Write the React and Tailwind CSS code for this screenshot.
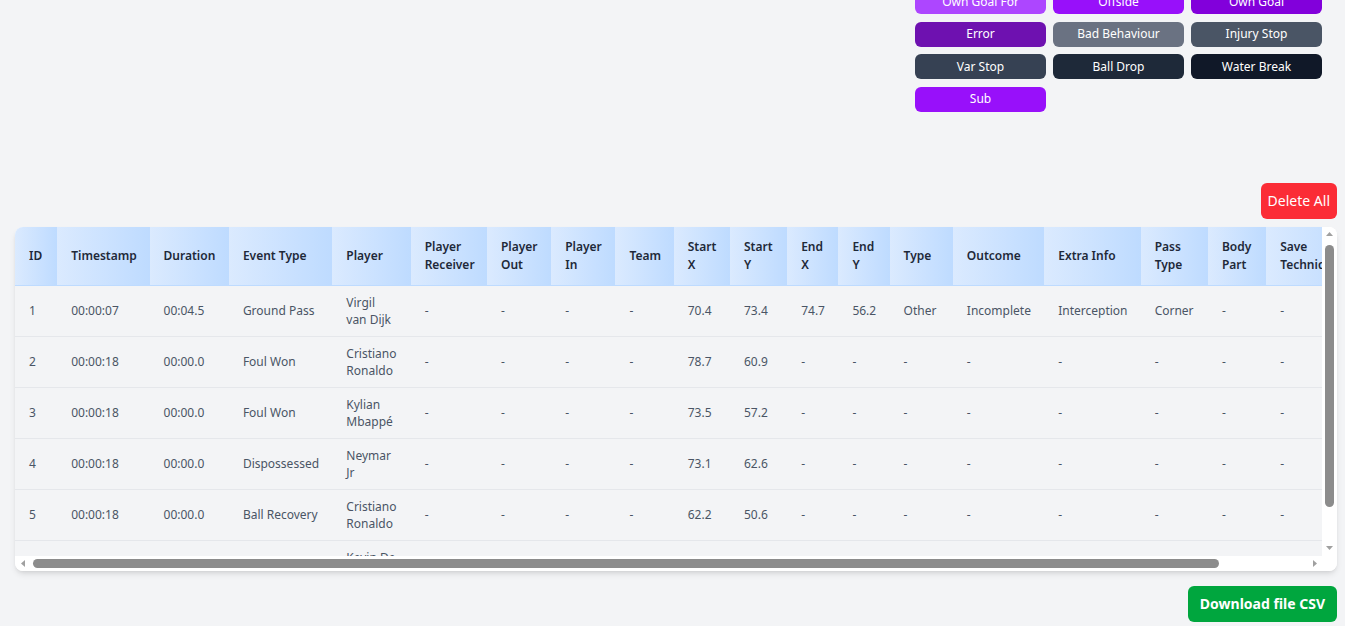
const EVENT_BUTTONS = [
  { label: "Own Goal For", cls: "bg-purple-500" },
  { label: "Offside", cls: "bg-purple-600" },
  { label: "Own Goal", cls: "bg-purple-700" },
  { label: "Error", cls: "bg-purple-800" },
  { label: "Bad Behaviour", cls: "bg-gray-500" },
  { label: "Injury Stop", cls: "bg-gray-600" },
  { label: "Var Stop", cls: "bg-gray-700" },
  { label: "Ball Drop", cls: "bg-gray-800" },
  { label: "Water Break", cls: "bg-gray-900" },
  { label: "Sub", cls: "bg-purple-600" },
];

const COLUMNS = [
  { key: "id", label: "ID", w: "w-[42px]" },
  { key: "timestamp", label: "Timestamp", w: "w-[92px]" },
  { key: "duration", label: "Duration", w: "w-[79px]" },
  { key: "eventType", label: "Event Type", w: "w-[103px]" },
  { key: "player", label: "Player", w: "w-[78px]" },
  { key: "receiver", label: "Player Receiver", w: "w-[76px]" },
  { key: "playerOut", label: "Player Out", w: "w-[64px]" },
  { key: "playerIn", label: "Player In", w: "w-[64px]" },
  { key: "team", label: "Team", w: "w-[58px]" },
  { key: "startX", label: "Start X", w: "w-[56px]" },
  { key: "startY", label: "Start Y", w: "w-[57px]" },
  { key: "endX", label: "End X", w: "w-[51px]" },
  { key: "endY", label: "End Y", w: "w-[51px]" },
  { key: "type", label: "Type", w: "w-[63px]" },
  { key: "outcome", label: "Outcome", w: "w-[91px]" },
  { key: "extra", label: "Extra Info", w: "w-[96px]" },
  { key: "passType", label: "Pass Type", w: "w-[67px]" },
  { key: "bodyPart", label: "Body Part", w: "w-[58px]" },
  { key: "save", label: "Save Technique", w: "w-[88px]" },
  { key: "actions", label: "Actions", w: "w-[80px]" },
];

const EVENTS = [
  { id: 1, timestamp: "00:00:07", duration: "00:04.5", eventType: "Ground Pass", player: "Virgil van Dijk", startX: "70.4", startY: "73.4", endX: "74.7", endY: "56.2", type: "Other", outcome: "Incomplete", extra: "Interception", passType: "Corner" },
  { id: 2, timestamp: "00:00:18", duration: "00:00.0", eventType: "Foul Won", player: "Cristiano Ronaldo", startX: "78.7", startY: "60.9" },
  { id: 3, timestamp: "00:00:18", duration: "00:00.0", eventType: "Foul Won", player: "Kylian Mbappé", startX: "73.5", startY: "57.2" },
  { id: 4, timestamp: "00:00:18", duration: "00:00.0", eventType: "Dispossessed", player: "Neymar Jr", startX: "73.1", startY: "62.6" },
  { id: 5, timestamp: "00:00:18", duration: "00:00.0", eventType: "Ball Recovery", player: "Cristiano Ronaldo", startX: "62.2", startY: "50.6" },
  { id: 6, timestamp: "00:00:24", duration: "00:01.2", eventType: "Carry", player: "Kevin De Bruyne", startX: "60.1", startY: "48.3" },
];

function Arrow({ dir }) {
  const pts = {
    up: "0,4 3.5,0 7,4",
    down: "0,0 7,0 3.5,4",
    left: "4,0 4,7 0,3.5",
    right: "0,0 4,3.5 0,7",
  }[dir];
  const vertical = dir === "up" || dir === "down";
  return (
    <div className="flex h-[15px] w-[15px] shrink-0 items-center justify-center">
      <svg width={vertical ? 7 : 4} height={vertical ? 4 : 7} viewBox={vertical ? "0 0 7 4" : "0 0 4 7"}>
        <polygon points={pts} fill="#a0a0a0" />
      </svg>
    </div>
  );
}

function EventButton({ label, cls }) {
  return (
    <button className={`h-[25px] rounded-md text-[12px] leading-none text-white ${cls}`}>
      {label}
    </button>
  );
}

export default function App() {
  return (
    <div className="min-h-screen bg-gray-100 font-['Noto_Sans',sans-serif]">
      <div className="flex justify-end pr-[23px] -mt-[11px]">
        <div className="grid w-[407px] grid-cols-3 gap-x-[7px] gap-y-[7.5px]">
          {EVENT_BUTTONS.map((b) => (
            <EventButton key={b.label} {...b} />
          ))}
        </div>
      </div>

      <div className="mt-[71px] flex justify-end pr-[8px]">
        <button className="rounded-md bg-red-500 px-[7px] py-2 text-sm leading-5 text-white">
          Delete All
        </button>
      </div>

      <div className="ml-[15px] mr-[8px] mt-2 grid h-[344px] grid-cols-[1fr_15px] grid-rows-[1fr_15px] overflow-hidden rounded-lg bg-white shadow-md">
        <div className="overflow-hidden">
          <table className="w-[1420px] table-fixed border-collapse text-left">
            <thead>
              <tr>
                {COLUMNS.map((c) => (
                  <th
                    key={c.key}
                    className={`${c.w} border-b border-blue-200 bg-linear-to-r from-blue-100 to-blue-200 pl-[14px] pr-[15px] py-[11px] text-[12px] font-semibold leading-[18px] text-gray-800`}
                  >
                    {c.label}
                  </th>
                ))}
              </tr>
            </thead>
            <tbody className="bg-gray-100">
              {EVENTS.map((row) => (
                <tr key={row.id} className="border-b border-gray-200">
                  {COLUMNS.map((c) => (
                    <td
                      key={c.key}
                      className={`pl-[14px] pr-[15px] py-2 text-[12px] leading-[17px] text-gray-600 ${c.key === "player" ? "" : "whitespace-nowrap"}`}
                    >
                      {row[c.key] ?? "-"}
                    </td>
                  ))}
                </tr>
              ))}
            </tbody>
          </table>
        </div>

        {/* vertical scrollbar */}
        <div className="flex flex-col items-center bg-white">
          <Arrow dir="up" />
          <div className="flex-1">
            <div className="mt-[3px] h-[262px] w-[9px] rounded-full bg-[#8c8c8c]" />
          </div>
          <Arrow dir="down" />
        </div>

        {/* horizontal scrollbar */}
        <div className="flex items-center bg-white">
          <Arrow dir="left" />
          <div className="flex-1">
            <div className="ml-[3px] h-[9px] w-[1186px] rounded-full bg-[#8c8c8c]" />
          </div>
          <Arrow dir="right" />
        </div>
        <div className="bg-white" />
      </div>

      <div className="mt-[15px] flex justify-end pr-[8px]">
        <button className="rounded-md bg-green-600 px-3 py-2 text-sm font-bold leading-5 text-white">
          Download file CSV
        </button>
      </div>
    </div>
  );
}
